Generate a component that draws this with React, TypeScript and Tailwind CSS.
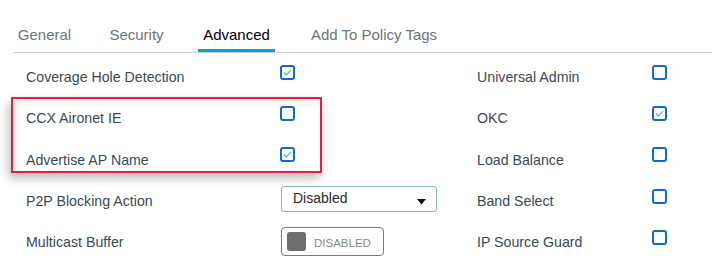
import React from 'react';

const tabs = [
  { label: 'General', w: 'w-[61px]' },
  { label: 'Security', w: 'w-[63px]' },
  { label: 'Advanced', w: 'w-[77px]' },
  { label: 'Add To Policy Tags', w: 'w-[138px]' },
];

function Check({ on }: { on?: boolean }) {
  return (
    <div className="w-[15px] h-[15px] mb-[11px] rounded-[3px] border-2 border-[#0d6bd4] flex items-center justify-center">
      {on && (
        <svg width="9" height="7" viewBox="0 0 9 7" fill="none">
          <path d="M1 3.6 L3.4 6 L8 1" stroke="#3a9fe4" strokeWidth="1.1" />
        </svg>
      )}
    </div>
  );
}

function Row({ label, w, children }: { label: string; w: string; children: React.ReactNode }) {
  return (
    <div className="h-[41.3px] flex items-center">
      <div className={`${w} text-[14.2px] text-[#3a4a52]`}>{label}</div>
      {children}
    </div>
  );
}

export default function App() {
  return (
    <div className="w-[712px] h-[268px] bg-white overflow-hidden" style={{ fontFamily: '"Liberation Sans", Arial, sans-serif' }}>
      <div className="ml-[14px] pt-[25px] flex gap-[30px] border-b border-[#c9cdd1]">
        {tabs.map((t) => (
          <div
            key={t.label}
            className={
              t.label === 'Advanced'
                ? `${t.w} text-center pb-1 border-b-[3px] border-[#049fd9] text-[15px] leading-5 text-black`
                : `${t.w} text-center pb-1 border-b-[3px] border-transparent text-[15px] leading-5 text-[#6c757a]`
            }
          >
            {t.label}
          </div>
        ))}
      </div>

      <div className="relative mt-[4px] flex">
        <div className="w-[476px] pl-[26px] flex flex-col">
          <Row label="Coverage Hole Detection" w="w-[254px]">
            <Check on />
          </Row>
          <Row label="CCX Aironet IE" w="w-[254px]">
            <Check />
          </Row>
          <Row label="Advertise AP Name" w="w-[254px]">
            <Check on />
          </Row>
          <Row label="P2P Blocking Action" w="w-[255px]">
            <div className="w-[156px] h-[26px] mb-[6px] rounded-[3px] border border-[#8db3c6] flex items-center justify-between pl-[11px] pr-[10px] text-[14px] text-[#2a2a2a]">
              <span>Disabled</span>
              <svg width="9" height="6" viewBox="0 0 9 6" className="mt-[6px]">
                <path d="M0 0 H9 L4.5 5.5 Z" fill="#111" />
              </svg>
            </div>
          </Row>
          <Row label="Multicast Buffer" w="w-[255px]">
            <div className="w-[103px] h-[29px] mb-[2px] rounded-[4px] border border-[#7a7a7a] flex items-center pl-[5px] gap-[8px]">
              <div className="w-[19px] h-[19px] rounded-[3px] bg-[#6e6e6e]" />
              <span className="text-[11.5px] text-[#8a8a8a] mt-[3px]">DISABLED</span>
            </div>
          </Row>
        </div>

        <div className="flex-1 flex flex-col pl-px">
          <Row label="Universal Admin" w="w-[175px]">
            <Check />
          </Row>
          <Row label="OKC" w="w-[175px]">
            <Check on />
          </Row>
          <Row label="Load Balance" w="w-[175px]">
            <Check />
          </Row>
          <Row label="Band Select" w="w-[175px]">
            <Check />
          </Row>
          <Row label="IP Source Guard" w="w-[175px]">
            <Check />
          </Row>
        </div>

        <div className="absolute left-[11px] top-[40px] w-[311px] h-[76px] border-2 border-[#e0223e] shadow-[-2px_5px_10px_rgba(0,0,0,0.28),inset_6px_6px_10px_-6px_rgba(0,0,0,0.18)] pointer-events-none" />
      </div>
    </div>
  );
}
